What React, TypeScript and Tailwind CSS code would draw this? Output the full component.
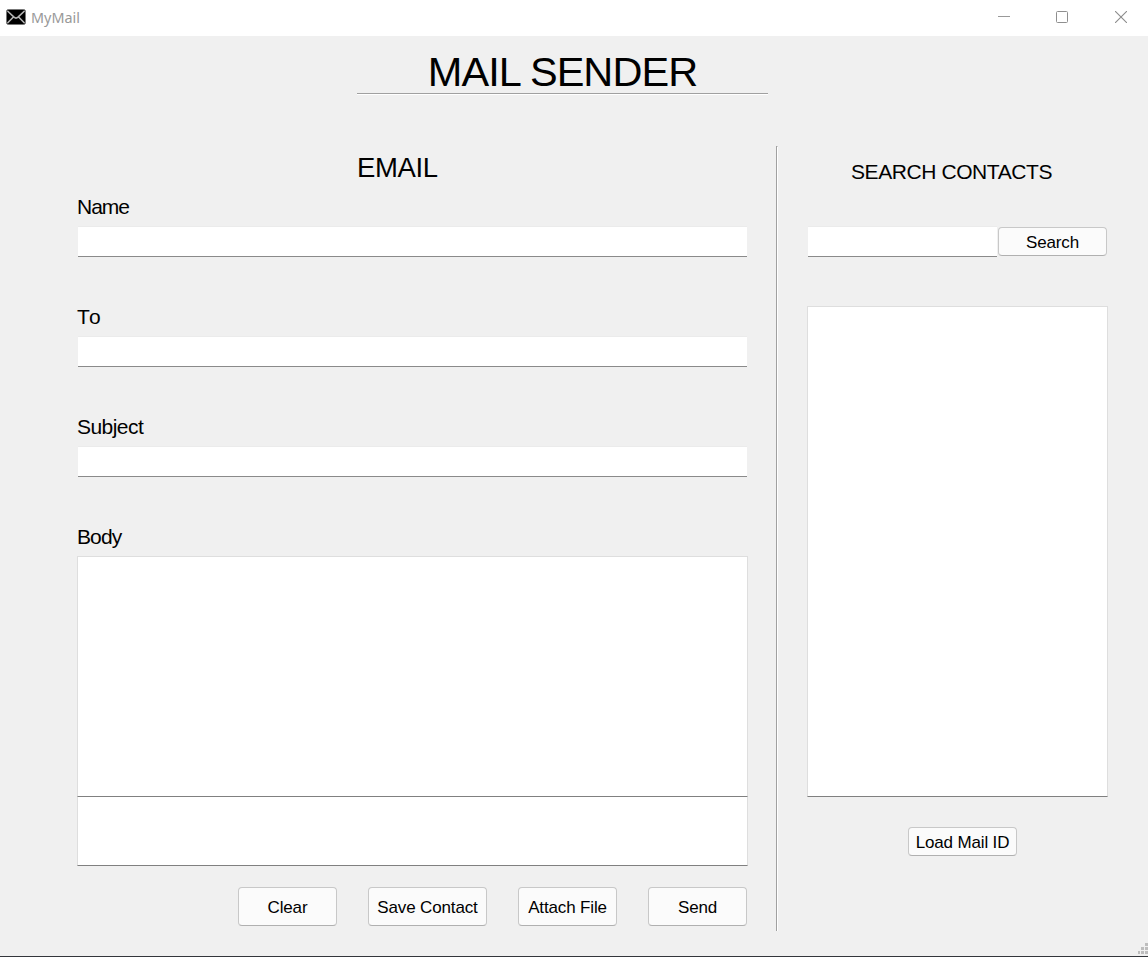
import type { ReactNode } from "react";

function MailIcon() {
  return (
    <svg className="block h-4 w-5" viewBox="0 0 20 16" fill="none">
      <rect x="0.5" y="0.5" width="19" height="15" rx="2" fill="#000" stroke="#777" />
      <path d="M1.5 2 8 8.2Q10 10 12 8.2L18.5 2M1.5 14 7.4 8M18.5 14 12.6 8" stroke="#b5b5b5" strokeWidth="1.6" />
    </svg>
  );
}

function TitleBar() {
  return (
    <header className="flex h-9 shrink-0 items-start justify-between bg-white">
      <div className="flex pl-1.5 pt-[9px]">
        <MailIcon />
        <span className="ml-[5px] font-['Noto_Sans',sans-serif] text-[14.4px] leading-[18px] text-[#999]">MyMail</span>
      </div>
      <div className="flex pr-[21px] pt-[11px]">
        <svg className="mr-[46px] block h-3 w-3" viewBox="0 0 12 12">
          <path d="M0 5.5h12" stroke="#999" />
        </svg>
        <svg className="mr-[47px] block h-3 w-3" viewBox="0 0 12 12" fill="none">
          <rect x="0.5" y="0.5" width="11" height="11" rx="1" stroke="#8f8f8f" />
        </svg>
        <svg className="block h-3 w-3" viewBox="0 0 12 12">
          <path d="M0 0 12 12M12 0 0 12" stroke="#8c8c8c" strokeWidth="1.1" />
        </svg>
      </div>
    </header>
  );
}

function Button({ className, children }: { className: string; children: ReactNode }) {
  return (
    <button
      type="button"
      className={`${className} shrink-0 whitespace-nowrap rounded-[4px] border border-[#c8c8c8] border-b-[#b0b0b0] bg-[#fbfbfb] pt-0.5 text-center text-[17px] tracking-[-0.15px]`}
    >
      {children}
    </button>
  );
}

function LineInput({ className, label }: { className: string; label: string }) {
  return (
    <input
      type="text"
      aria-label={label}
      className={`${className} block h-[31px] border-b border-t border-b-[#8a8a8a] border-t-[#ebebeb] bg-white px-2 outline-none`}
    />
  );
}

function Field({ label, textClass }: { label: string; textClass: string }) {
  return (
    <div className="mb-[30px] h-20">
      <div className={`-ml-px h-[49px] pt-[18px] text-[21px] leading-6 ${textClass}`}>{label}</div>
      <LineInput label={label} className="w-[669px]" />
    </div>
  );
}

export default function App() {
  return (
    <div className="flex h-[957px] w-[1148px] flex-col overflow-hidden border-b border-[#33363b] bg-[#f0f0f0] font-['Liberation_Sans',Arial,sans-serif] text-black">
      <TitleBar />
      <h1 className="ml-[357px] h-[59px] w-[411px] shrink-0 border-b border-white text-center text-[41.5px] tracking-[-0.95px]">
        <span className="block h-[58px] border-b border-[#a0a0a0] pt-[13px] leading-[46px]">MAIL SENDER</span>
      </h1>
      <main className="mt-[51px] flex h-[785px] shrink-0">
        <section className="w-[776px] pl-[78px]">
          <h2 className="ml-[279px] h-[31px] pt-[6px] text-[27.5px] leading-8 tracking-[-0.4px]">EMAIL</h2>
          <Field label="Name" textClass="tracking-[-1px]" />
          <Field label="To" textClass="tracking-[1.4px]" />
          <Field label="Subject" textClass="tracking-[-0.55px]" />
          <div className="-ml-px h-[49px] pt-[18px] text-[21px] leading-6 tracking-[-0.9px]">Body</div>
          <textarea
            aria-label="Body"
            className="-ml-px block h-[241px] w-[671px] resize-none border-x border-b border-t border-x-[#dedede] border-b-[#808080] border-t-[#dedede] bg-white outline-none"
          />
          <div className="-ml-px h-[69px] w-[671px] border-x border-b border-x-[#dedede] border-b-[#808080] bg-white" />
          <div className="ml-[160px] mt-[21px] flex gap-[31px]">
            <Button className="h-[39px] w-[99px]">Clear</Button>
            <Button className="h-[39px] w-[119px]">Save Contact</Button>
            <Button className="h-[39px] w-[99px]">Attach File</Button>
            <Button className="h-[39px] w-[99px]">Send</Button>
          </div>
        </section>
        <div className="w-0.5 shrink-0 border-l border-r border-t border-l-[#a0a0a0] border-r-white border-t-[#a0a0a0]" />
        <aside className="pl-[30px]">
          <h2 className="ml-[43px] h-20 pt-[14px] text-[21px] leading-6 tracking-[-0.42px]">SEARCH CONTACTS</h2>
          <div className="flex gap-px">
            <LineInput label="Search contacts" className="w-[189px]" />
            <Button className="mt-px h-[29px] w-[109px]">Search</Button>
          </div>
          <div className="-ml-px mt-[49px] h-[491px] w-[301px] border border-[#dedede] border-b-[#808080] bg-white" />
          <div className="ml-[100px] mt-[30px] flex">
            <Button className="h-[29px] w-[109px]">Load Mail ID</Button>
          </div>
        </aside>
      </main>
      <footer className="flex min-h-0 flex-1 items-end justify-end">
        <svg className="mb-px block h-3 w-[10px]" viewBox="0 0 10 12" fill="#bdbdbd">
          <path d="M7 0h3v3H7zM3 4h3v3H3zM7 4h3v3H7zM0 8h2v3H0zM3 8h3v3H3zM7 8h3v3H7z" />
        </svg>
      </footer>
    </div>
  );
}
